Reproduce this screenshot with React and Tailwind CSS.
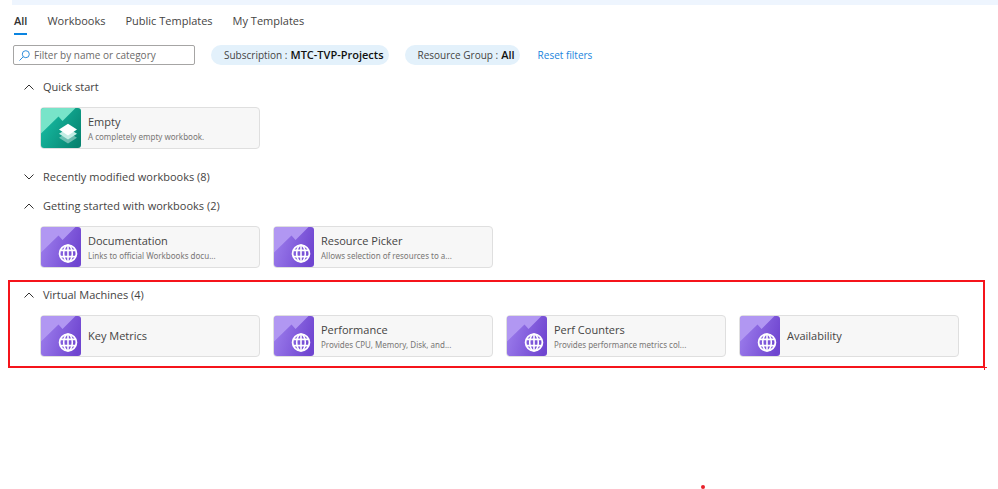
import { useState } from 'react'

const tabs = ['All', 'Workbooks', 'Public Templates', 'My Templates']

const gettingStarted = [
    { title: 'Documentation', text: 'Links to official Workbooks docu...' },
    { title: 'Resource Picker', text: 'Allows selection of resources to a...' },
]

const virtualMachines = [
    { title: 'Key Metrics' },
    { title: 'Performance', text: 'Provides CPU, Memory, Disk, and...' },
    { title: 'Perf Counters', text: 'Provides performance metrics col...' },
    { title: 'Availability' },
]

function GlobeIcon() {
    return (
        <svg viewBox="0 0 40 40" className="h-10 w-10 shrink-0 rounded-[3px]" aria-hidden="true">
            <defs>
                <linearGradient id="globe-bg" x1="0" y1="0.3" x2="1" y2="0.6">
                    <stop offset="0" stopColor="#9c7dec" />
                    <stop offset="1" stopColor="#6f45d0" />
                </linearGradient>
            </defs>
            <rect width="40" height="40" fill="url(#globe-bg)" />
            <path d="M0 0H34.5L21.5 13L17.5 8.5L0 25.5Z" fill="#b197f2" />
            <g fill="none" stroke="#fff" strokeWidth="1.6">
                <circle cx="27" cy="26.5" r="8.4" strokeWidth="1.8" />
                <ellipse cx="27" cy="26.5" rx="4.3" ry="8.4" />
                <path d="M27 18V35M19.2 23.4H34.8M19.2 29.6H34.8" />
            </g>
        </svg>
    )
}

function LayersIcon() {
    return (
        <svg viewBox="0 0 40 40" className="h-10 w-10 shrink-0 rounded-[3px]" aria-hidden="true">
            <defs>
                <linearGradient id="layers-bg" x1="0" y1="0.2" x2="1" y2="0.8">
                    <stop offset="0" stopColor="#18bfa5" />
                    <stop offset="1" stopColor="#078370" />
                </linearGradient>
            </defs>
            <rect width="40" height="40" fill="url(#layers-bg)" />
            <path d="M0 0H34.5L21.5 13L17.5 8.5L0 25.5Z" fill="#78e4c9" />
            <path d="M18 29.8L27 24L36 29.8L27 35.6Z" fill="#fff" opacity="0.4" />
            <path d="M18 25.8L27 20L36 25.8L27 31.6Z" fill="#c5ede5" />
            <path d="M18 21.6L27 15.8L36 21.6L27 27.4Z" fill="#fff" />
        </svg>
    )
}

function Card({ title, text, icon }) {
    return (
        <button
            type="button"
            className="flex h-[42px] w-[220px] items-center gap-[7px] rounded border border-[#dfdfdf] bg-[#f7f7f7] text-left"
        >
            {icon || <GlobeIcon />}
            <span className={text ? 'pt-[2px]' : ''}>
                <span className="block text-[11px] leading-4 text-[#454443]">{title}</span>
                {text && (
                    <span className="block font-['Noto_Sans',sans-serif] text-[8px] leading-[14px] whitespace-nowrap text-[#777675]">
                        {text}
                    </span>
                )}
            </span>
        </button>
    )
}

function Section({ title, defaultOpen = true, children }) {
    const [open, setOpen] = useState(defaultOpen)

    return (
        <section>
            <button
                type="button"
                aria-expanded={open}
                onClick={() => setOpen(!open)}
                className="flex h-5 items-center gap-[9px] text-[11px] text-[#454443]"
            >
                <svg viewBox="0 0 10 6" className="h-[6px] w-[10px]" fill="none" stroke="#323130">
                    <path d={open ? 'M0.5 5.5L5 1L9.5 5.5' : 'M0.5 0.5L5 5L9.5 0.5'} />
                </svg>
                {title}
            </button>
            {open && children && (
                <div className="mt-[10px] flex flex-wrap gap-[13px] pl-4">{children}</div>
            )}
        </section>
    )
}

function FilterPill({ label, value }) {
    return (
        <button
            type="button"
            className="flex h-5 items-center gap-[3px] rounded-full bg-[#e3f1fb] pr-[5px] pl-[13px] text-[10px] whitespace-nowrap text-[#454443]"
        >
            <span>{label} :</span>
            <span className="text-[11px] font-semibold text-[#111]">{value}</span>
        </button>
    )
}

export default function App() {
    const [active, setActive] = useState('All')
    const [filter, setFilter] = useState('')

    return (
        <div className="relative min-h-screen bg-white font-['Open_Sans','Noto_Sans',sans-serif]">
            <div className="ml-3 h-[5px] bg-[#eef5fe]" />

            <nav className="flex gap-5 pt-[6px] pl-[14px]">
                {tabs.map((tab) => (
                    <button
                        key={tab}
                        type="button"
                        onClick={() => setActive(tab)}
                        className={
                            tab === active
                                ? 'h-6 border-b-2 border-[#0a84e0] pb-1 text-[11px] leading-5 font-semibold text-[#323130]'
                                : 'h-6 border-b-2 border-transparent pb-1 text-[11px] leading-5 text-[#454443]'
                        }
                    >
                        {tab}
                    </button>
                ))}
            </nav>

            <div className="mt-[10px] flex items-center gap-4 pl-[13px]">
                <label className="flex h-5 w-[182px] items-center gap-1 rounded-[2px] border border-[#a6a5a4] px-[5px]">
                    <svg viewBox="0 0 11 11" className="h-[11px] w-[11px] shrink-0" fill="none" stroke="#2f8fdc">
                        <circle cx="6.8" cy="4.2" r="3.5" />
                        <path d="M4.3 6.7L0.5 10.5" />
                    </svg>
                    <input
                        type="text"
                        aria-label="Filter by name or category"
                        placeholder="Filter by name or category"
                        value={filter}
                        onChange={(e) => setFilter(e.target.value)}
                        className="w-full min-w-0 text-[10px] text-[#323130] outline-none placeholder:text-[#6b6a69]"
                    />
                </label>
                <FilterPill label="Subscription" value="MTC-TVP-Projects" />
                <FilterPill label="Resource Group" value="All" />
                <a href="#reset" className="pl-[2px] text-[10px] whitespace-nowrap text-[#1a84dd]">
                    Reset filters
                </a>
            </div>

            <main className="pt-3">
                <div className="pl-6">
                    <Section title="Quick start">
                        <Card title="Empty" text="A completely empty workbook." icon={<LayersIcon />} />
                    </Section>
                    <div className="mt-[18px]">
                        <Section title="Recently modified workbooks (8)" defaultOpen={false} />
                    </div>
                    <div className="mt-[9px]">
                        <Section title="Getting started with workbooks (2)">
                            {gettingStarted.map((item) => (
                                <Card key={item.title} {...item} />
                            ))}
                        </Section>
                    </div>
                </div>

                <div className="relative mt-3 mr-[13px] ml-2 border-2 border-[#f5141b] pt-[3px] pb-[9px] pl-[14px]">
                    <Section title="Virtual Machines (4)">
                        {virtualMachines.map((item) => (
                            <Card key={item.title} {...item} />
                        ))}
                    </Section>
                    <span className="absolute -right-1 -bottom-[2px] h-px w-2 bg-[#f5141b]" />
                    <span className="absolute -right-[2px] -bottom-1 h-2 w-px bg-[#f5141b]" />
                </div>
            </main>

            <span className="absolute bottom-0 left-[701px] h-1 w-1 rounded-full bg-[#e8202a]" />
        </div>
    )
}
